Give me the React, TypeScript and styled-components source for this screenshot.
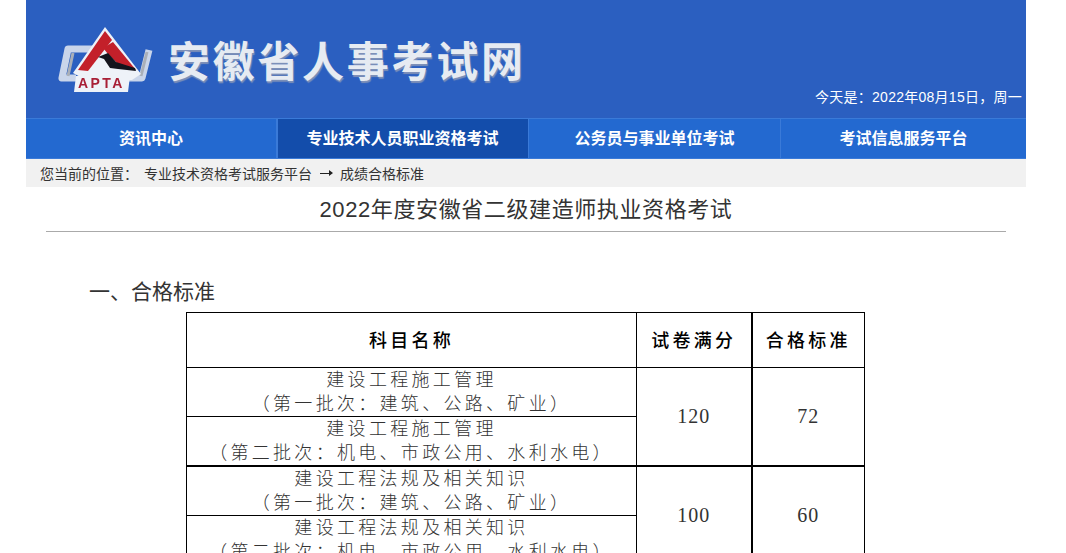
import React from 'react'
import styled, { createGlobalStyle } from 'styled-components'

const GlobalStyle = createGlobalStyle`
  html, body {
    margin: 0;
    padding: 0;
    height: 553px;
    overflow: hidden;
    background: #fff;
    font-family: "Liberation Sans", "Noto Sans CJK SC", sans-serif;
  }
`

const Page = styled.div`
  width: 1000px;
  margin-left: 26px;
`

const Header = styled.header`
  height: 118px;
  background: #2b5fc0;
  display: flex;
  padding: 26px 4px 0 30px;
  box-sizing: border-box;
`

const Logo = styled.svg`
  width: 100px;
  height: 68px;
  flex: none;
  filter: blur(0.5px);
`

const SiteName = styled.h1`
  margin: 9px 0 0 12px;
  font-size: 42px;
  line-height: 56px;
  height: 56px;
  font-weight: 700;
  letter-spacing: 2.7px;
  color: #e6ebf2;
  text-shadow: 1px 2px 1px #7d90b8;
  white-space: nowrap;
`

const Today = styled.div`
  margin: 58px 0 0 auto;
  font-size: 14px;
  line-height: 26px;
  height: 26px;
  letter-spacing: 0.26px;
  color: #fff;
  white-space: nowrap;
`

const Nav = styled.nav`
  display: grid;
  grid-template-columns: 251px 252px 252px 245px;
  height: 41px;
  background: #2369d0;
  border-top: 1px solid #3a7ad8;
  border-bottom: 1px solid #3a7ad8;
  box-sizing: border-box;
`

const NavItem = styled.a<{ $active?: boolean }>`
  display: flex;
  align-items: center;
  justify-content: center;
  padding: 0 1px 3px 0;
  font-size: 16px;
  font-weight: 700;
  color: #fff;
  background: ${p => (p.$active ? '#134dab' : 'transparent')};
  border-left: 1px solid ${p => (p.$active ? '#3a7ad8' : 'transparent')};
  border-right: 1px solid #3a7ad8;
  &:last-child {
    border-right: 0;
  }
`

const Crumbs = styled.div`
  height: 28px;
  background: #f1f1f1;
  padding-left: 14px;
  display: flex;
  align-items: center;
  font-size: 14px;
  color: #333;
  white-space: nowrap;
`

const CrumbLabel = styled.span`
  margin-right: 6px;
`

const CrumbArrow = styled.svg`
  width: 13px;
  height: 8px;
  margin: 0 7px 0 8px;
`

const Content = styled.main`
  padding: 0 20px;
`

const Title = styled.h2`
  margin: 0;
  height: 44px;
  line-height: 45px;
  text-align: center;
  font-size: 22px;
  letter-spacing: 0.6px;
  font-weight: 400;
  color: #333;
  border-bottom: 1px solid #aaa;
`

const SectionTitle = styled.h3`
  margin: 45px 0 5px 43px;
  height: 30px;
  line-height: 30px;
  font-size: 21px;
  font-weight: 400;
  color: #333;
`

const Table = styled.table`
  margin-left: 140px;
  width: 678px;
  table-layout: fixed;
  border-collapse: collapse;
  font-family: "Liberation Serif", "Noto Sans CJK SC", serif;
  color: #333;
`

const HeadCell = styled.th<{ $thick?: boolean }>`
  height: 52px;
  padding: 0 0 2px;
  border: 1px solid #000;
  border-right-width: ${p => (p.$thick ? 2 : 1)}px;
  font-family: "Noto Sans CJK SC", sans-serif;
  font-size: 18px;
  font-weight: 500;
  letter-spacing: 3.2px;
  color: #000;
`

const NameCell = styled.td<{ $thickTop?: boolean }>`
  height: 48px;
  padding: 0;
  border: 1px solid #000;
  border-top-width: ${p => (p.$thickTop ? 2 : 1)}px;
  font-size: 18px;
  font-weight: 300;
  line-height: 24px;
  letter-spacing: 3.3px;
  text-align: center;
  white-space: nowrap;
`

const ValueCell = styled.td<{ $thick?: boolean; $thickTop?: boolean }>`
  padding: 0;
  border: 1px solid #000;
  border-right-width: ${p => (p.$thick ? 2 : 1)}px;
  border-top-width: ${p => (p.$thickTop ? 2 : 1)}px;
  font-size: 20px;
  letter-spacing: 1px;
  text-align: center;
`

const groups = [
  { name: '建设工程施工管理', full: '120', pass: '72' },
  { name: '建设工程法规及相关知识', full: '100', pass: '60' },
]

const App = () => {
  return (
    <Page>
      <GlobalStyle />
      <Header>
        <Logo viewBox="0 0 100 68">
          <g fill="none" stroke="#c9d5ea" strokeWidth="7" strokeLinejoin="round">
            <path d="M38 23H12L6 52H20" />
            <path d="M93 24L86 52H72" />
          </g>
          <g fill="none" stroke="#a9afb8" strokeWidth="3">
            <path d="M17 27L12 50" />
            <path d="M91 26L85 50" />
          </g>
          <path d="M49 1L85 48L76 54H30L17 47Z" fill="#eef2f8" />
          <path d="M49 5L56 14L32 45L22 44Z" fill="#c3202a" />
          <path d="M57 16L80 44L62 38L52 28L47 22Z" fill="#c3202a" />
          <path d="M42 31L52 27L60 36L79 42L80 45L62 43L54 42L48 33Z" fill="#14141c" />
          <path d="M20 50H74L72 66H18Z" fill="#eef2f8" />
          <text x="22" y="62" fontFamily="Liberation Sans" fontSize="14" fontWeight="700" letterSpacing="2.4" fill="#a81f36">APTA</text>
        </Logo>
        <SiteName>安徽省人事考试网</SiteName>
        <Today>今天是：2022年08月15日，周一</Today>
      </Header>
      <Nav>
        <NavItem>资讯中心</NavItem>
        <NavItem $active>专业技术人员职业资格考试</NavItem>
        <NavItem>公务员与事业单位考试</NavItem>
        <NavItem>考试信息服务平台</NavItem>
      </Nav>
      <Crumbs>
        <CrumbLabel>您当前的位置：</CrumbLabel>
        专业技术资格考试服务平台
        <CrumbArrow viewBox="0 0 13 8">
          <path d="M0 4H9V1L13 4L9 7V5H0Z" fill="#222" />
        </CrumbArrow>
        成绩合格标准
      </Crumbs>
      <Content>
        <Title>2022年度安徽省二级建造师执业资格考试</Title>
        <SectionTitle>一、合格标准</SectionTitle>
        <Table>
          <colgroup>
            <col style={{ width: 450 }} />
            <col style={{ width: 115 }} />
            <col style={{ width: 113 }} />
          </colgroup>
          <thead>
            <tr>
              <HeadCell>科目名称</HeadCell>
              <HeadCell $thick>试卷满分</HeadCell>
              <HeadCell>合格标准</HeadCell>
            </tr>
          </thead>
          <tbody>
            {groups.map((g, i) => (
              <React.Fragment key={g.name}>
                <tr>
                  <NameCell $thickTop={i > 0}>
                    {g.name}
                    <br />（第一批次：建筑、公路、矿业）
                  </NameCell>
                  <ValueCell rowSpan={2} $thick $thickTop={i > 0}>{g.full}</ValueCell>
                  <ValueCell rowSpan={2} $thickTop={i > 0}>{g.pass}</ValueCell>
                </tr>
                <tr>
                  <NameCell>
                    {g.name}
                    <br />（第二批次：机电、市政公用、水利水电）
                  </NameCell>
                </tr>
              </React.Fragment>
            ))}
          </tbody>
        </Table>
      </Content>
    </Page>
  )
}

export default App
